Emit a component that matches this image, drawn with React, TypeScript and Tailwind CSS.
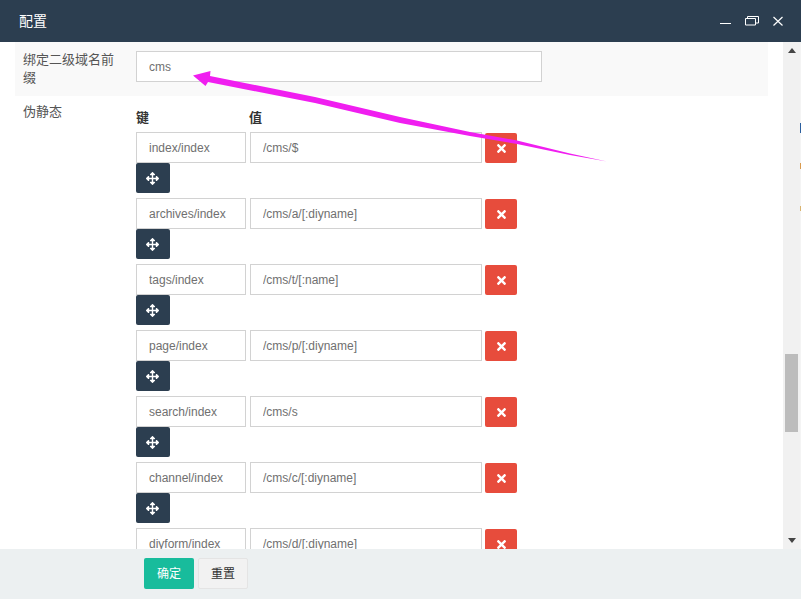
import { FaArrowsAlt, FaTimes } from 'react-icons/fa'

const rules = [
  { key: 'index/index', value: '/cms/$' },
  { key: 'archives/index', value: '/cms/a/[:diyname]' },
  { key: 'tags/index', value: '/cms/t/[:name]' },
  { key: 'page/index', value: '/cms/p/[:diyname]' },
  { key: 'search/index', value: '/cms/s' },
  { key: 'channel/index', value: '/cms/c/[:diyname]' },
  { key: 'diyform/index', value: '/cms/d/[:diyname]' },
]

const font = { fontFamily: '"Liberation Sans", "Noto Sans CJK SC", sans-serif' }

function RuleRow({ name, value }: { name: string; value: string }) {
  return (
    <div className="h-[66px] shrink-0">
      <div className="flex">
        <input
          readOnly
          value={name}
          className="h-[31px] w-[110px] border border-[#d2d2d2] bg-white px-3 text-xs text-[#707070] outline-none"
        />
        <input
          readOnly
          value={value}
          className="ml-1 h-[31px] w-[232px] border border-[#d2d2d2] bg-white px-3 text-xs text-[#707070] outline-none"
        />
        <button className="ml-[3px] mt-px flex h-[30px] w-8 items-center justify-center rounded-[2px] bg-[#e74c3c] text-[13px] text-white">
          <FaTimes />
        </button>
      </div>
      <button className="flex h-[30px] w-[34px] items-center justify-center rounded-[2px] bg-[#2c3e50] pr-[2px] pt-[1px] text-[13px] text-white">
        <FaArrowsAlt />
      </button>
    </div>
  )
}

export default function App() {
  return (
    <div className="relative flex h-[599px] w-[801px] flex-col overflow-hidden bg-white" style={font}>
      {/* Title bar */}
      <div className="flex h-[42px] shrink-0 items-center justify-between bg-[#2c3e50] pl-[19px] pr-[18px] text-white">
        <span className="text-sm">配置</span>
        <div className="flex items-center gap-[14px]">
          <svg width="12" height="12" viewBox="0 0 12 12" fill="none" stroke="#fff">
            <path d="M1 8.500h11" />
          </svg>
          <svg width="14" height="12" viewBox="0 0 14 12" fill="none" stroke="#fff">
            <path d="M.5 3.500h10v6.500h-10z" />
            <path d="M2.500 3.500v-2h11v6.500h-3" />
          </svg>
          <svg width="10" height="11" viewBox="0 0 10 11" fill="none" stroke="#fff" strokeWidth="1.2">
            <path d="M.5 1l9 8.500M9.500 1l-9 8.500" />
          </svg>
        </div>
      </div>

      <div className="flex min-h-0 flex-1">
        {/* Form */}
        <div className="min-w-0 flex-1 overflow-hidden px-[15px]">
          <div className="flex h-[54px] bg-[#f9f9f9] pl-2 pt-[9px]">
            <label className="w-[113px] shrink-0 pr-[15px] text-[13px] leading-[18px] text-[#555]">绑定二级域名前缀</label>
            <input
              readOnly
              value="cms"
              className="h-[31px] w-[406px] border border-[#d2d2d2] bg-white px-3 text-xs text-[#707070] outline-none"
            />
          </div>
          <div className="flex pl-2 pt-2">
            <label className="-mt-px w-[113px] text-[13px] leading-[18px] text-[#555]">伪静态</label>
            <div className="flex flex-col">
              <div className="flex h-[28px] items-end pb-[5px] text-[13px] font-bold leading-[18px] text-[#333]">
                <span className="w-[113px]">键</span>
                <span>值</span>
              </div>
              {rules.map((r) => (
                <RuleRow key={r.key} name={r.key} value={r.value} />
              ))}
            </div>
          </div>
        </div>

        {/* Scrollbar */}
        <div className="relative flex w-[17px] shrink-0 flex-col items-center justify-between bg-[#f1f1f1] py-[6px]">
          <svg width="8" height="5" viewBox="0 0 8 5" fill="#444">
            <path d="M4 0l4 5H0z" />
          </svg>
          <div className="absolute left-[2px] top-[312px] h-[78px] w-[13px] bg-[#bcbcbc]" />
          <svg width="8" height="5" viewBox="0 0 8 5" fill="#444">
            <path d="M4 5l4-5H0z" />
          </svg>
        </div>
        <div className="w-px shrink-0 bg-[#f4f4f4]" />
      </div>

      {/* Footer */}
      <div className="flex h-[50px] shrink-0 items-center gap-1 bg-[#ecf0f1] pl-[144px] pb-[1px] text-xs">
        <button className="h-[31px] w-[50px] rounded-[2px] bg-[#18bc9c] text-white">确定</button>
        <button className="h-[31px] w-[50px] rounded-[2px] border border-[#e4e4e4] bg-[#f2f2f2] text-[#333]">重置</button>
      </div>

      {/* Annotation arrow over the screenshot */}
      <svg className="pointer-events-none absolute left-0 top-0" width="801" height="599">
        <path
          d="M193 75.500L210.500 71L210 76L315 97L400 117L470 132L517 140.500L570 153.500L607 161.500L570 155L517 144L470 136L400 123L315 103L208 82L205.500 86z"
          fill="#f01ef0"
        />
      </svg>

      {/* Page behind the dialog, showing along the right edge */}
      <div className="absolute right-0 top-[123px] h-[10px] w-px bg-[#2c5f9e]" />
      <div className="absolute right-0 top-[163px] h-[6px] w-px bg-[#d99a4e]" />
      <div className="absolute right-0 top-[206px] h-[5px] w-px bg-[#d9b36e]" />
    </div>
  )
}
